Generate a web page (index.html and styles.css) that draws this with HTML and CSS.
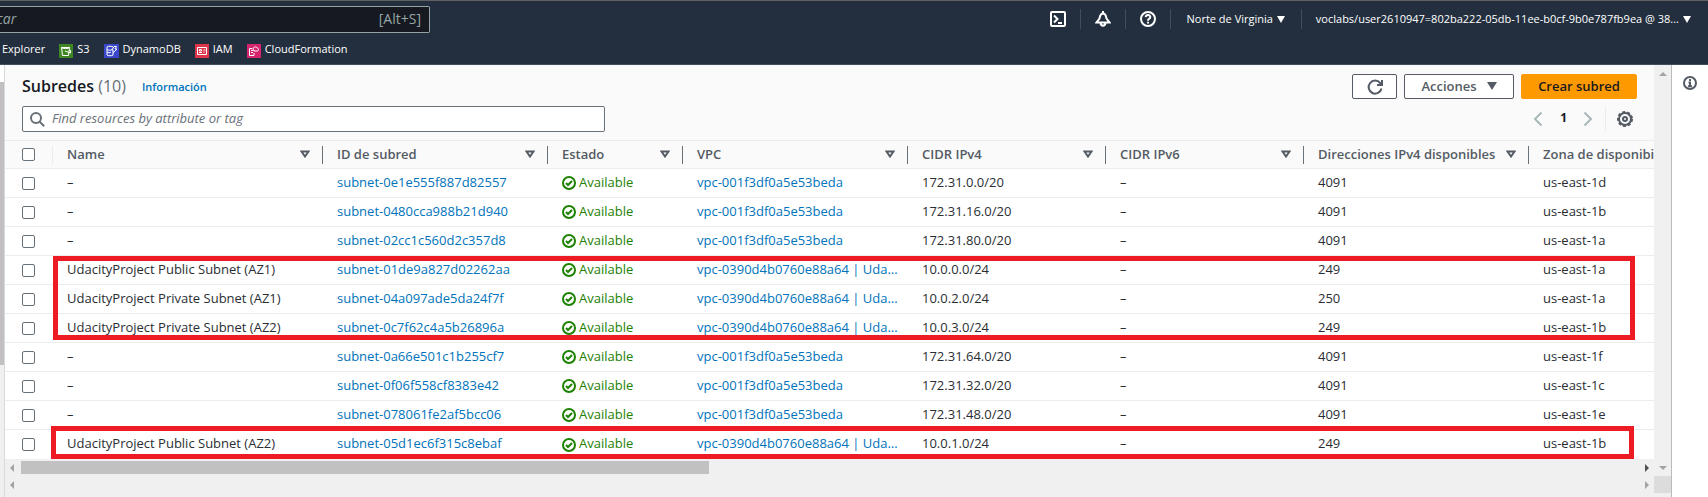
FILE: index.html
```html
<!DOCTYPE html>
<html lang="es">
<head>
<meta charset="utf-8">
<title>Subredes</title>
<link rel="stylesheet" href="styles.css">
</head>
<body>
<header class="top">
  <div class="bar">
    <label class="search"><input type="text" aria-label="Buscar" placeholder="Buscar"><span>[Alt+S]</span></label>
    <nav class="tools" aria-label="Cuenta">
      <button aria-label="CloudShell"><svg width="16" height="16" viewBox="0 0 16 16"><rect x="1" y="1" width="14" height="14" rx="1"/><path d="M4 4.500l3.500 3.500L4 11.500M8 12h4"/></svg></button>
      <button aria-label="Notificaciones"><svg width="16" height="16" viewBox="0 0 16 16"><path d="M8 0v3M8 2.500c-3 0-3 3-3.500 5L1.500 11.500h13l-3-4C11 5.500 11 2.500 8 2.500zM5.500 12c.5 3.500 4.500 3.500 5 0"/></svg></button>
      <button aria-label="Ayuda"><svg width="16" height="16" viewBox="0 0 16 16"><circle cx="8" cy="8" r="7"/><path d="M5.700 6.200c.3-3 4.800-2.700 4.600 0C10.200 7.800 8 7.600 8 9.700M8 10.800v1.700"/></svg></button>
      <button class="region">Norte de Virginia <i class="caret"></i></button>
      <button class="account">voclabs/user2610947=802ba222-05db-11ee-b0cf-9b0e787fb9ea @ 38... <i class="caret"></i></button>
    </nav>
  </div>
  <nav class="favs" aria-label="Favoritos">
    <a href="#" class="explorer">Explorer</a>
    <a href="#"><svg class="svc s3" width="14" height="14" viewBox="0 0 14 14"><path d="M2.500 3.500h8l-1 8h-6zM2.500 3.500c1 1.500 7 1.500 8 0M6 7l5.500 2V6.500H10"/></svg>S3</a>
    <a href="#"><svg class="svc dynamo" width="15" height="14" viewBox="0 0 15 14"><path d="M3 3c1-1 5-1 6 0M3 3v8c1 1 5 1 6 0V9M3 5.500c1 1 4 1 5 0M3 8c1 1 3 1 4 0M10 2.500h2.500l-1.500 2.500h2L9 9V6H8z"/></svg>DynamoDB</a>
    <a href="#"><svg class="svc iam" width="14" height="14" viewBox="0 0 14 14"><path d="M2.500 3.500h9v7h-9zM4 8.500h3M4.500 5.500h2v1.500h-2zM8.500 6h2M8.500 8h1"/></svg>IAM</a>
    <a href="#"><svg class="svc cfn" width="14" height="14" viewBox="0 0 14 14"><path d="M5 4.500H2.500v7H7V9M4 6.500h2M4 8.500h2M6 5c0-2 3-3 4-1 2 0 2 3 0 3H7z"/></svg>CloudFormation</a>
  </nav>
</header>
<div class="shell">
  <div class="edge"></div>
  <main class="main">
    <div class="content">
      <section class="panel">
        <div class="heading">
          <h1>Subredes <span>(10)</span></h1>
          <a href="#" class="info">Información</a>
          <div class="actions">
            <button class="btn icon" aria-label="Actualizar"><svg width="18" height="18" viewBox="0 0 18 18"><path d="M15.500 10.500a6.500 6.500 0 1 1-1.300-5.500L16 7M16 2v5h-5"/></svg></button>
            <button class="btn menu">Acciones <i class="caret"></i></button>
            <button class="btn primary">Crear subred</button>
          </div>
        </div>
        <div class="filter">
          <label class="find"><svg width="15" height="15" viewBox="0 0 15 15"><circle cx="6" cy="6" r="5"/><path d="M9.700 9.700l4.500 4.500"/></svg><input type="text" aria-label="Buscar recursos" placeholder="Find resources by attribute or tag"></label>
          <div class="pager">
            <button aria-label="Anterior" class="arrow"><svg width="10" height="16" viewBox="0 0 10 16"><path d="M8.500 1.500L2 8l6.500 6.500"/></svg></button>
            <button class="page">1</button>
            <button aria-label="Siguiente" class="arrow"><svg width="10" height="16" viewBox="0 0 10 16"><path d="M1.500 1.500L8 8l-6.500 6.500"/></svg></button>
            <button aria-label="Preferencias" class="gear"><svg width="16" height="16" viewBox="0 0 16 16"><circle cx="8" cy="8" r="6"/><circle class="teeth" cx="8" cy="8" r="7"/><circle cx="8" cy="8" r="2"/></svg></button>
          </div>
        </div>
      </section>
      <div class="tablewrap">
        <table>
          <colgroup><col class="c0"><col class="c1"><col class="c2"><col class="c3"><col class="c4"><col class="c5"><col class="c5"><col class="c7"><col class="c8"></colgroup>
          <thead><tr id="head"></tr></thead>
          <tbody id="rows"></tbody>
        </table>
        <div class="mark group"></div>
        <div class="mark single"></div>
      </div>
      <div class="hscroll"><i class="tri left"></i><span class="thumb"></span><i class="tri right dark"></i></div>
    </div>
    <div class="vscroll"><i class="tri up"></i><i class="tri down"></i></div>
    <div class="hscroll outer"><i class="tri left"></i><i class="tri right"></i></div>
    <div class="corner"></div>
  </main>
  <aside class="help"><button aria-label="Información"><svg width="16" height="16" viewBox="0 0 16 16"><circle cx="8" cy="8" r="6"/><path d="M8 4v2M6.500 7.500H8V11M6 11.200h4"/></svg></button></aside>
</div>
<script src="app.js"></script>
</body>
</html>
```
FILE: styles.css
```css
* { box-sizing: border-box; }
body { margin: 0; height: 100vh; overflow: hidden; display: flex; flex-direction: column; font: 13px/20px "Open Sans", "Noto Sans", sans-serif; color: #16191f; background: #fff; }
button, input { font: inherit; color: inherit; margin: 0; }
button { background: none; border: 0; padding: 0; display: flex; align-items: center; cursor: pointer; }
a { color: #0073bb; text-decoration: none; }
svg { fill: none; stroke: currentColor; flex: none; }
.caret { width: 0; height: 0; border: solid transparent; border-width: 7px 4px 0; border-top-color: currentColor; }

.top { background: #232f3e; color: #fff; border-top: 1px solid #606060; border-bottom: 1px solid #414d5c; flex: none; }
.bar { display: flex; justify-content: space-between; padding-top: 5px; height: 36px; }
.search { width: 430px; height: 27px; display: flex; align-items: center; background: #161920; border: 1px solid #95a5a6; border-left: 0; border-radius: 0 2px 2px 0; padding: 0 8px 2px 0; color: #95a5a6; font-size: 14px; overflow: hidden; }
.search input { flex: 1; margin-left: -26px; background: none; border: 0; padding: 0; outline: 0; }
.search input::placeholder { color: #95a5a6; font-style: italic; opacity: 1; }
.tools { display: flex; align-items: center; height: 26px; font-size: 11px; font-weight: 500; }
.tools button { height: 20px; padding: 0 14px; border-left: 1px solid #414d5c; }
.tools button:first-child { border-left: 0; }
.tools svg { stroke-width: 2; }
.tools .region { gap: 4px; padding: 0 16px; }
.tools .account { padding: 0 17px 0 14px; gap: 4px; }
.favs { display: flex; align-items: center; height: 27px; padding-bottom: 3px; gap: 14px; font-size: 11px; font-weight: 500; }
.favs a { display: flex; align-items: center; gap: 4px; color: #fff; }
.explorer { padding-left: 2px; }
.svc { stroke-width: 1; margin-top: 3px; }
.s3 { background: #3f8624; }
.dynamo { background: #3b48cc; }
.iam { background: #dd344c; }
.cfn { background: #d6246e; }

.shell { flex: 1; display: flex; min-height: 0; }
.edge { width: 5px; background: linear-gradient(#fff 17px, #c1bfc1 17px, #c1bfc1 300px, #f0f0f0 300px); border-right: 1px solid #d5dbdb; flex: none; border-left: 0; }
.main { flex: 1; min-width: 0; display: grid; grid-template: auto 17px 1fr / minmax(0, 1fr) 17px; background: #f0f0f0; }
.content { min-width: 0; }
.vscroll { display: flex; flex-direction: column; justify-content: space-between; align-items: center; padding: 7px 0 6px; background: #f0f0f0; }
.help { width: 37px; flex: none; border-left: 1px solid #b9bcbe; padding: 10px 0 0 10px; color: #545b64; }
.help svg { stroke-width: 2; }

.panel { background: #fafafa; padding: 9px 17px 8px; border-bottom: 1px solid #eaeded; }
.heading { display: flex; align-items: center; height: 25px; }
h1 { margin: 0; padding-bottom: 2px; font-size: 16px; font-weight: 600; }
h1 span { font-weight: 400; color: #687078; }
.info { font-size: 11px; font-weight: 600; margin-left: 16px; }
.actions { display: flex; gap: 7px; margin-left: auto; }
.btn { height: 25px; justify-content: center; border: 1px solid #545b64; border-radius: 2px; padding-bottom: 2px; background: #fff; color: #545b64; font-weight: 600; }
.icon { width: 45px; padding: 0; }
.icon svg { stroke-width: 2; }
.menu { width: 110px; gap: 10px; }
.btn .caret { border-width: 8px 5px 0; border-top-color: #545b64; }
.primary { width: 116px; background: #ff9900; border-color: #ff9900; color: #16191f; }
.filter { display: flex; justify-content: space-between; align-items: center; padding-top: 7px; }
.find { display: flex; align-items: center; gap: 7px; flex: 0 1 583px; height: 26px; padding: 0 7px; background: #fff; border: 1px solid #687078; border-radius: 2px; color: #687078; }
.find svg { stroke-width: 2; }
.find input { flex: 1; border: 0; outline: 0; padding: 0 0 3px; }
.find input::placeholder { color: #687078; font-style: italic; opacity: 1; }
.pager { display: flex; align-items: center; height: 24px; color: #545b64; }
.arrow { color: #aab7b8; stroke-width: 2; }
.page { padding: 0 16px 3px 17px; font-weight: 700; font-size: 12px; color: #16191f; }
.gear { height: 24px; margin-left: 12px; padding: 0 4px 0 11px; border-left: 1px solid #eaeded; stroke-width: 2; }
.teeth { stroke-dasharray: 3 2; }

.tablewrap { position: relative; overflow: hidden; background: #fff; }
table { table-layout: fixed; width: 1760px; border-collapse: separate; border-spacing: 0; }
.c0 { width: 47px; } .c1 { width: 270px; } .c2 { width: 225px; } .c3 { width: 135px; } .c4 { width: 225px; } .c5 { width: 198px; } .c7 { width: 225px; } .c8 { width: 237px; }
th, td { height: 29px; padding: 0 15px; text-align: left; white-space: nowrap; border-bottom: 1px solid #eaeded; line-height: 20px; }
td { padding: 0 8px 3px 15px; color: #2a2e33; }
tbody tr:last-child td { border-bottom: 0; }
th { height: 28px; background: #fafafa; color: #545b64; padding: 0; font-weight: 600; }
th:first-child, td:first-child { padding: 0 0 0 17px; }
.th { display: flex; align-items: center; justify-content: space-between; height: 18px; padding: 0 12px 2px 15px; border-left: 1px solid #687078; margin-left: 0; padding-left: 14px; }
.th.first { border-color: #eaeded; }
.th svg { stroke-width: 2; }
input[type=checkbox] { appearance: none; display: block; width: 13px; height: 13px; border: 1px solid #687078; border-radius: 2px; background: #fff; }
.state { display: flex; align-items: center; gap: 3px; color: #1d8102; }
.state svg { stroke-width: 2; margin-top: 3px; }
.mark { position: absolute; border: 5px solid #ed1c24; }
.group { left: 48px; top: 115px; width: 1582px; height: 84px; }
.single { left: 46px; bottom: 0; width: 1583px; height: 33px; }

.hscroll { display: flex; align-items: center; height: 17px; padding: 0 5px; background: #f0f0f0; }
.thumb { width: 42%; height: 13px; margin-left: 7px; background: #c1c1c1; }
.tri { width: 0; height: 0; border: 4px solid transparent; flex: none; }
.tri.left { border-left: 0; border-right-color: #a3a3a3; }
.tri.right { border-right: 0; border-left-color: #a3a3a3; margin-left: auto; }
.tri.dark { border-left-color: #505050; }
.tri.up { border-top: 0; border-bottom-color: #a3a3a3; }
.tri.down { border-bottom: 0; border-top-color: #a3a3a3; }
.corner { background: #dcdcdc; }
```
FILE: app.js
```js
const heads = ["Name", "ID de subred", "Estado", "VPC", "CIDR IPv4", "CIDR IPv6", "Direcciones IPv4 disponibles", "Zona de disponibilidad"];
const base = "vpc-001f3df0a5e53beda";
const project = "vpc-0390d4b0760e88a64 | Uda…";
const data = [
  ["–", "subnet-0e1e555f887d82557", base, "172.31.0.0/20", 4091, "us-east-1d"],
  ["–", "subnet-0480cca988b21d940", base, "172.31.16.0/20", 4091, "us-east-1b"],
  ["–", "subnet-02cc1c560d2c357d8", base, "172.31.80.0/20", 4091, "us-east-1a"],
  ["UdacityProject Public Subnet (AZ1)", "subnet-01de9a827d02262aa", project, "10.0.0.0/24", 249, "us-east-1a"],
  ["UdacityProject Private Subnet (AZ1)", "subnet-04a097ade5da24f7f", project, "10.0.2.0/24", 250, "us-east-1a"],
  ["UdacityProject Private Subnet (AZ2)", "subnet-0c7f62c4a5b26896a", project, "10.0.3.0/24", 249, "us-east-1b"],
  ["–", "subnet-0a66e501c1b255cf7", base, "172.31.64.0/20", 4091, "us-east-1f"],
  ["–", "subnet-0f06f558cf8383e42", base, "172.31.32.0/20", 4091, "us-east-1c"],
  ["–", "subnet-078061fe2af5bcc06", base, "172.31.48.0/20", 4091, "us-east-1e"],
  ["UdacityProject Public Subnet (AZ2)", "subnet-05d1ec6f315c8ebaf", project, "10.0.1.0/24", 249, "us-east-1b"]
];
const sort = '<svg width="10" height="8" viewBox="0 0 10 8"><path d="M1.500 1.500h7L5 6.500z"/></svg>';
const ok = '<svg width="14" height="14" viewBox="0 0 14 14"><circle cx="7" cy="7" r="6"/><path d="M4 7l2 2 4-4"/></svg>';
document.getElementById("head").innerHTML =
  '<th><input type="checkbox" aria-label="Seleccionar todo"></th>' +
  heads.map((h, i) => `<th><div class="th${i ? "" : " first"}">${h}${sort}</div></th>`).join("");
document.getElementById("rows").innerHTML = data.map(([name, id, vpc, cidr, free, zone]) =>
  `<tr><td><input type="checkbox" aria-label="${id}"></td><td>${name}</td><td><a href="#">${id}</a></td>` +
  `<td><div class="state">${ok}Available</div></td><td><a href="#">${vpc}</a></td><td>${cidr}</td><td>–</td><td>${free}</td><td>${zone}</td></tr>`
).join("");
```
